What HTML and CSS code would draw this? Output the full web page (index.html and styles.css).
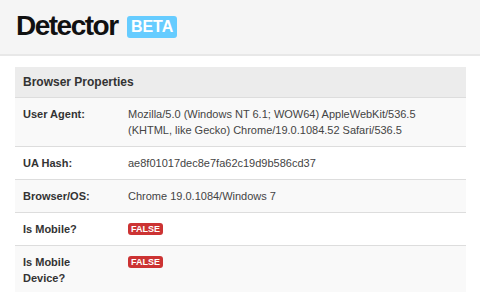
FILE: index.html
```html
<!DOCTYPE html>
<html lang="en">
<head>
    <meta charset="UTF-8">
    <meta name="viewport" content="width=device-width, initial-scale=1.0">
    <title>Detector</title>
    <link rel="stylesheet" href="styles.css">
</head>
<body>
    <!-- Page Header -->
    <div class="page-header">
        <h1 class="title">Detector <span class="badge-beta">BETA</span></h1>
    </div>

    <!-- Properties Table -->
    <div class="content">
        <table class="props">
            <thead>
                <tr><th colspan="2">Browser Properties</th></tr>
            </thead>
            <tbody>
                <tr>
                    <td class="label">User Agent:</td>
                    <td>Mozilla/5.0 (Windows NT 6.1; WOW64) AppleWebKit/536.5 (KHTML, like Gecko) Chrome/19.0.1084.52 Safari/536.5</td>
                </tr>
                <tr>
                    <td class="label">UA Hash:</td>
                    <td>ae8f01017dec8e7fa62c19d9b586cd37</td>
                </tr>
                <tr>
                    <td class="label">Browser/OS:</td>
                    <td>Chrome 19.0.1084/Windows 7</td>
                </tr>
                <tr>
                    <td class="label">Is Mobile?</td>
                    <td><span class="tag-false">FALSE</span></td>
                </tr>
                <tr>
                    <td class="label">Is Mobile Device?</td>
                    <td><span class="tag-false">FALSE</span></td>
                </tr>
            </tbody>
        </table>
    </div>
</body>
</html>
```

FILE: styles.css
```css
/* Reset and global styles */
* {
    margin: 0;
    padding: 0;
    box-sizing: border-box;
}

body {
    font-family: 'Liberation Sans', Arial, sans-serif;
    background: #fff;
    color: #333;
}

/* Header */
.page-header {
    background: #f5f5f5;
    border-bottom: 2px solid #e8e8e8;
    padding: 9px 16px 11px;
}

.title {
    font-size: 28px;
    line-height: 34px;
    font-weight: bold;
    letter-spacing: -1.5px;
    color: #111;
}

.badge-beta {
    display: inline-block;
    vertical-align: 3px;
    margin-left: 3px;
    background: #66ccff;
    color: #fff;
    font-size: 16px;
    line-height: 22px;
    letter-spacing: 0;
    padding: 0 4px;
    border-radius: 3px;
}

/* Table */
.content {
    padding: 11px 14px 0 15px;
}

.props {
    width: 100%;
    border-collapse: collapse;
    font-size: 11px;
    line-height: 16px;
}

.props th {
    text-align: left;
    background: #ececec;
    font-size: 12px;
    padding: 7px 8px;
    color: #333;
}

.props td {
    padding: 8px;
    border-top: 1px solid #ddd;
    vertical-align: top;
    color: #444;
}

.props tbody tr:nth-child(odd) td {
    background: #f9f9f9;
}

.props td.label {
    width: 105px;
    font-weight: bold;
    color: #333;
}

.tag-false {
    display: inline-block;
    background: #cc3333;
    color: #fff;
    font-size: 9px;
    font-weight: bold;
    line-height: 12px;
    padding: 0 3px;
    border-radius: 3px;
    vertical-align: 1px;
}
```
